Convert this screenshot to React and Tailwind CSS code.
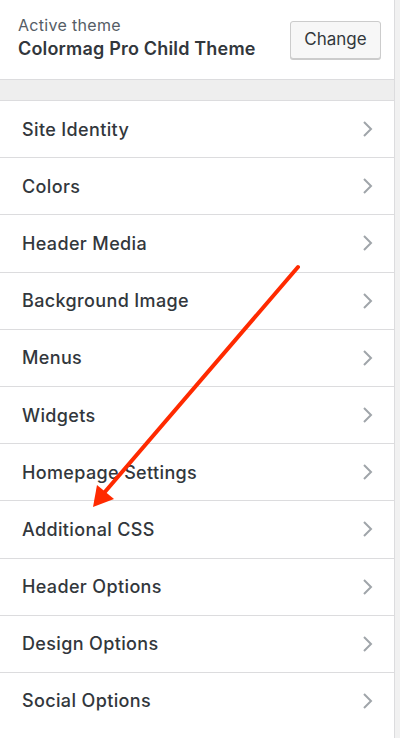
const SECTIONS = [
  "Site Identity",
  "Colors",
  "Header Media",
  "Background Image",
  "Menus",
  "Widgets",
  "Homepage Settings",
  "Additional CSS",
  "Header Options",
  "Design Options",
  "Social Options",
];

function Chevron() {
  return (
    <svg width="12" height="18" viewBox="0 0 12 18" fill="none">
      <path d="M3 2l7 7-7 7" stroke="#a0a5aa" strokeWidth="2" />
    </svg>
  );
}

export default function App() {
  return (
    <div
      className="relative flex h-[738px] w-[400px] overflow-hidden bg-[#f1f1f1]"
      style={{ fontFamily: "Inter, 'Noto Sans', sans-serif" }}
    >
      <div className="w-[395px] shrink-0 border-r border-[#dcdcde] bg-white">
        <div className="flex h-[80px] items-center justify-between border-b border-[#dcdcde] pl-[18px] pr-[13px]">
          <div className="mb-[5px]">
            <p className="text-[16px] leading-[20px] tracking-[0.02em] text-[#555d66]">Active theme</p>
            <p className="mt-[3px] text-[18px] font-semibold leading-[22px] tracking-[0.01em] text-[#32373c]">
              Colormag Pro Child Theme
            </p>
          </div>
          <button className="h-[38px] w-[91px] rounded-[3px] border border-[#ccc] bg-[#f7f7f7] text-[17px] text-[#32373c] shadow-[0_1px_0_#ccc]">
            Change
          </button>
        </div>
        <div className="h-[20px] bg-[#eeeeee]"></div>
        <ul>
          {SECTIONS.map((name) => (
            <li
              key={name}
              className="flex h-[57.2px] items-center justify-between border-t border-[#dcdcde] pl-[22px] pr-[21px]"
            >
              <span className="text-[18px] font-medium tracking-[0.02em] text-[#32373c]">{name}</span>
              <Chevron />
            </li>
          ))}
        </ul>
      </div>
      <div className="flex-1"></div>

      <svg
        className="pointer-events-none absolute left-0 top-0"
        width="400"
        height="738"
        viewBox="0 0 400 738"
      >
        <line x1="298" y1="267" x2="104" y2="493" stroke="#ff2a00" strokeWidth="4" strokeLinecap="round" />
        <polygon points="93,507 97,485 114,499" fill="#ff2a00" />
      </svg>
    </div>
  );
}
